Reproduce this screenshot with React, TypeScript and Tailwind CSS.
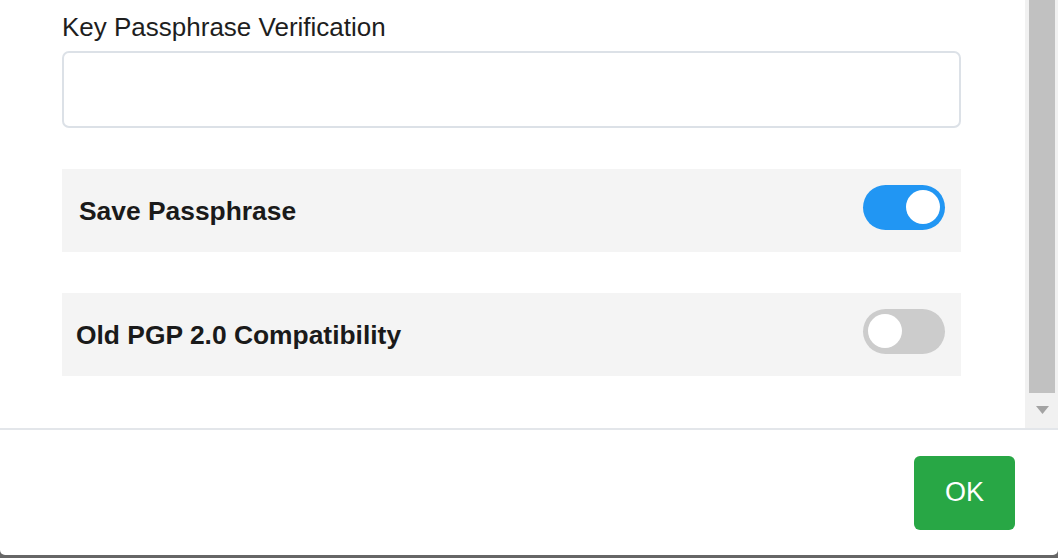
import { useState } from "react";

type ToggleRowProps = {
  label: string;
  checked: boolean;
  onToggle: () => void;
  padLeft: string;
};

function ToggleRow({ label, checked, onToggle, padLeft }: ToggleRowProps) {
  return (
    <div
      className={`flex h-[83px] items-center justify-between bg-[#f4f4f4] pr-[16px] ${padLeft}`}
    >
      <span className="text-[26.4px] font-bold leading-[30px] text-[#1a1a1a]">
        {label}
      </span>
      <button
        onClick={onToggle}
        className={`mb-[7px] flex h-[45px] w-[82px] items-center rounded-full px-[5px] transition ${
          checked ? "justify-end bg-[#2196f3]" : "justify-start bg-[#cccccc]"
        }`}
      >
        <span className="h-[34px] w-[34px] rounded-full bg-white" />
      </button>
    </div>
  );
}

export default function App() {
  const [savePass, setSavePass] = useState(true);
  const [oldPgp, setOldPgp] = useState(false);

  return (
    <div
      className="h-[558px] w-[1058px] overflow-hidden bg-[#666666]"
      style={{ fontFamily: '"Liberation Sans", Arial, sans-serif' }}
    >
      <div className="flex h-[555px] flex-col rounded-b-[5px] bg-white">
        <div className="flex h-[428px]">
          <div className="flex flex-1 flex-col pl-[62px] pr-[64px] pt-[12px]">
            <label className="text-[26px] leading-[30px] text-[#1e1e1e]">
              Key Passphrase Verification
            </label>
            <input
              type="password"
              className="mt-[9px] h-[77px] w-full rounded-[7px] border-2 border-[#dce1e7] bg-white px-4 outline-none"
            />
            <div className="mt-[41px] flex flex-col gap-[41px]">
              <ToggleRow
                label="Save Passphrase"
                checked={savePass}
                onToggle={() => setSavePass(!savePass)}
                padLeft="pl-[17px]"
              />
              <ToggleRow
                label="Old PGP 2.0 Compatibility"
                checked={oldPgp}
                onToggle={() => setOldPgp(!oldPgp)}
                padLeft="pl-[14px]"
              />
            </div>
          </div>

          {/* scrollbar */}
          <div className="flex w-[33px] flex-col bg-[#f1f1f1] pl-[4px] pr-[3px]">
            <div className="h-[393px] bg-[#c1c1c1]" />
            <div className="flex flex-1 items-center justify-center pb-[2px]">
              <svg width="13" height="8" viewBox="0 0 13 8">
                <path d="M0 0 H13 L6.5 8 Z" fill="#a3a3a3" />
              </svg>
            </div>
          </div>
        </div>

        <div className="flex flex-1 items-center justify-end border-t-2 border-[#e3e6ea] pr-[43px]">
          <button className="flex h-[74px] w-[101px] items-center justify-center rounded-[6px] bg-[#28a745] text-[27px] text-white">
            OK
          </button>
        </div>
      </div>
    </div>
  );
}
